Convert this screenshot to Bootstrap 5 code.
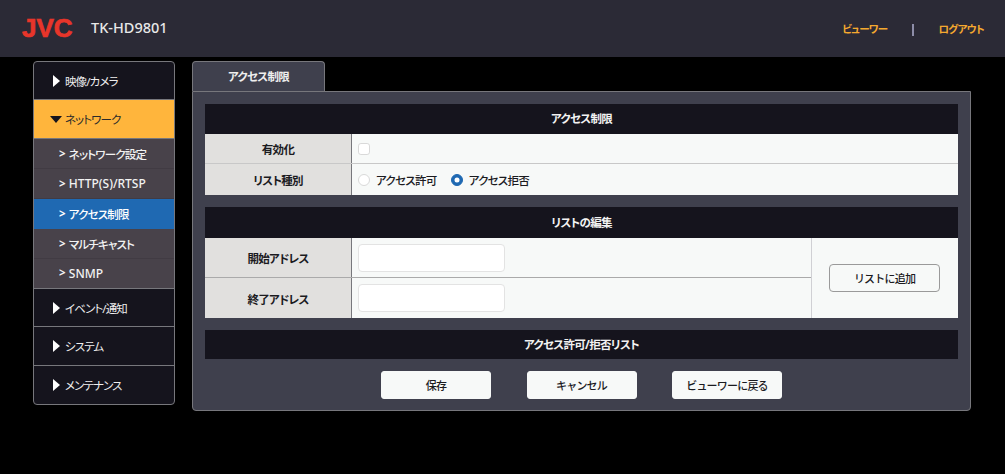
<!DOCTYPE html>
<html lang="ja">
<head>
<meta charset="utf-8">
<title>TK-HD9801</title>
<link href="https://cdn.jsdelivr.net/npm/bootstrap@5.3.0/dist/css/bootstrap.min.css" rel="stylesheet">
<style>
html,body{height:474px;overflow:hidden}
body{background:#000;font-family:"Noto Sans","Noto Sans CJK JP",sans-serif;font-size:11.5px;letter-spacing:-.7px;color:#1b1b1f;line-height:1.2;font-feature-settings:"palt"}
.topbar{height:57px;background:#2b2a36;padding:0 21px 0 22px}
.logo-text{font-family:"Liberation Sans",sans-serif;font-weight:700;font-size:26px;letter-spacing:0;color:#e8352a;width:52px;line-height:1;margin-top:-1px;-webkit-text-stroke:.7px #e8352a}
.model{font-size:14.5px;letter-spacing:0;font-weight:500;color:#e8e8e8;margin-left:17px;margin-top:-2px}
.toplink{color:#f5a92f;font-size:10.5px;font-weight:700;text-decoration:none;padding-top:2px}
.topsep{width:2px;height:12px;background:#8d8da8;margin:2px 24px 0 25px}
.wrap{padding:4px 0 0 33px;gap:17px}
.sidemenu{width:142px;height:344px;background:#15141d;border:1px solid #77777c;border-radius:4px;overflow:hidden;flex:none}
.mainitem{height:38.5px;color:#eee;padding-left:19px;border-bottom:1px solid #77777c;text-decoration:none;gap:5px;letter-spacing:-.9px}
.mainitem:last-child{border-bottom:0}
.mainitem.opened{background:#ffb53c;color:#2a2a2a;padding-left:16px;gap:3px;height:39px}
.menutext{padding-top:2px}
.tri-r{width:0;height:0;border-left:7px solid #fff;border-top:6px solid transparent;border-bottom:6px solid transparent}
.tri-d{width:0;height:0;border-top:7px solid #15141d;border-left:6px solid transparent;border-right:6px solid transparent}
.subitem{height:30px;background:#48424a;color:#f2f2f2;padding-left:25px;font-weight:700;text-decoration:none;border-bottom:1px solid #413b43;gap:4px;letter-spacing:-.8px}
.subitem.current{background:#1f69b2;color:#fff;border-bottom-color:#1f69b2}
.subitem.last-sub{border-bottom:1px solid #77777c}
.subtext{padding-top:2px;font-weight:500}
.subtext.latin{font-size:12px;letter-spacing:0}
.content-col{width:779px;flex:none}
.tabhead{width:133px;height:30px;background:#3f404d;border:1px solid #77777c;border-bottom:0;border-radius:4px 4px 0 0;color:#eee;font-weight:700}
.panelbox{height:320px;background:#3f404d;border:1px solid #77777c;border-radius:0 0 4px 4px;padding:12px}
.sect-title{background:#15141d;color:#f2f2f2;font-weight:700;height:30px}
.rowline{height:30px}
.rowtall{height:31px}
.labelcell{width:147px;background:#e1e0de;border-right:1px solid #77777c;font-weight:700;flex:none;padding-top:3px}
.valuecell{background:#f7f9f8;padding-left:6px;flex:1 1 auto;min-width:0}
.rowdiv{border-bottom:1px solid #c8c8c8}
.form-check-input.chk{width:12px;height:12px;margin:0;border-color:#d9d9d9;background-color:#fff}
.form-check-input.rad{width:12px;height:12px;margin:0;border-color:#d9d9d9;background-color:#fff}
.form-check-input.rad:checked{background-color:#1f69b2;border-color:#1f69b2}
.radtext{margin:0 14px 0 6px;font-weight:500;padding-top:2px}
.addrinput{width:147px;height:28px;padding:0 6px;border-color:#e3e3e3;border-radius:4px;font-size:12px;background:#fff}
.editleft{flex:1 1 auto;min-width:0}
.addrrow{height:40px}
.addrrow.top-addr{border-bottom:1px solid #aaa}
.addcell{width:147px;flex:none;background:#f7f9f8;border-left:1px solid #d0d0d4}
.btn.addbtn{width:111px;height:28px;padding:2px 0 0;font-size:11px;letter-spacing:-.8px;font-weight:500;background:#f7f9f8;border:1px solid #9a9a9a;border-radius:4px;color:#1b1b1f;margin-left:17px}
.btn.actbtn{width:110px;height:28px;padding:3px 0 0;font-size:11px;letter-spacing:-.8px;font-weight:500;background:#f7f9f8;border:1px solid #f7f9f8;border-radius:3px;color:#1b1b1f}
.actrow{gap:35.5px;margin-top:12px}
.sectgap{margin-top:12px}
.titletall{height:31px}
.titleshort{height:29px}
</style>
</head>
<body>
<header class="topbar d-flex align-items-center justify-content-between">
  <div class="d-flex align-items-center">
    <div class="logo-text">JVC</div>
    <div class="model">TK-HD9801</div>
  </div>
  <nav class="d-flex align-items-center">
    <a class="toplink" href="#">ビューワー</a>
    <span class="topsep"></span>
    <a class="toplink" href="#">ログアウト</a>
  </nav>
</header>
<main class="wrap d-flex align-items-start">
  <nav class="sidemenu d-flex flex-column">
    <a class="mainitem d-flex align-items-center" href="#"><span class="tri-r"></span><span class="menutext">映像/カメラ</span></a>
    <a class="mainitem opened d-flex align-items-center" href="#"><span class="tri-d"></span><span class="menutext">ネットワーク</span></a>
    <a class="subitem d-flex align-items-center" href="#"><span>&gt;</span><span class="subtext">ネットワーク設定</span></a>
    <a class="subitem d-flex align-items-center" href="#"><span>&gt;</span><span class="subtext latin">HTTP(S)/RTSP</span></a>
    <a class="subitem current d-flex align-items-center" href="#"><span>&gt;</span><span class="subtext">アクセス制限</span></a>
    <a class="subitem d-flex align-items-center" href="#"><span>&gt;</span><span class="subtext">マルチキャスト</span></a>
    <a class="subitem last-sub d-flex align-items-center" href="#"><span>&gt;</span><span class="subtext latin">SNMP</span></a>
    <a class="mainitem d-flex align-items-center" href="#"><span class="tri-r"></span><span class="menutext">イベント/通知</span></a>
    <a class="mainitem d-flex align-items-center" href="#"><span class="tri-r"></span><span class="menutext">システム</span></a>
    <a class="mainitem d-flex align-items-center" href="#"><span class="tri-r"></span><span class="menutext">メンテナンス</span></a>
  </nav>
  <section class="content-col">
    <div class="tabhead d-flex align-items-center justify-content-center">アクセス制限</div>
    <div class="panelbox">
      <div class="sect-title d-flex align-items-center justify-content-center">アクセス制限</div>
      <div class="rowline rowdiv d-flex">
        <div class="labelcell d-flex align-items-center justify-content-center">有効化</div>
        <div class="valuecell d-flex align-items-center"><input class="form-check-input chk" type="checkbox" aria-label="有効化"></div>
      </div>
      <div class="rowtall d-flex">
        <div class="labelcell d-flex align-items-center justify-content-center">リスト種別</div>
        <div class="valuecell d-flex align-items-center">
          <input class="form-check-input rad" type="radio" name="listtype" id="r1"><label class="radtext" for="r1">アクセス許可</label>
          <input class="form-check-input rad" type="radio" name="listtype" id="r2" checked><label class="radtext" for="r2">アクセス拒否</label>
        </div>
      </div>
      <div class="sect-title titletall sectgap d-flex align-items-center justify-content-center">リストの編集</div>
      <div class="d-flex">
        <div class="editleft">
          <div class="addrrow top-addr d-flex">
            <div class="labelcell d-flex align-items-center justify-content-center">開始アドレス</div>
            <div class="valuecell d-flex align-items-center"><input class="form-control addrinput" type="text" aria-label="開始アドレス"></div>
          </div>
          <div class="addrrow d-flex">
            <div class="labelcell d-flex align-items-center justify-content-center">終了アドレス</div>
            <div class="valuecell d-flex align-items-center"><input class="form-control addrinput" type="text" aria-label="終了アドレス"></div>
          </div>
        </div>
        <div class="addcell d-flex align-items-center"><button class="btn addbtn" type="button">リストに追加</button></div>
      </div>
      <div class="sect-title titleshort sectgap d-flex align-items-center justify-content-center">アクセス許可/拒否リスト</div>
      <div class="actrow d-flex justify-content-center">
        <button class="btn actbtn" type="button">保存</button>
        <button class="btn actbtn" type="button">キャンセル</button>
        <button class="btn actbtn" type="button">ビューワーに戻る</button>
      </div>
    </div>
  </section>
</main>
<script src="https://cdn.jsdelivr.net/npm/bootstrap@5.3.0/dist/js/bootstrap.bundle.min.js"></script>
</body>
</html>
